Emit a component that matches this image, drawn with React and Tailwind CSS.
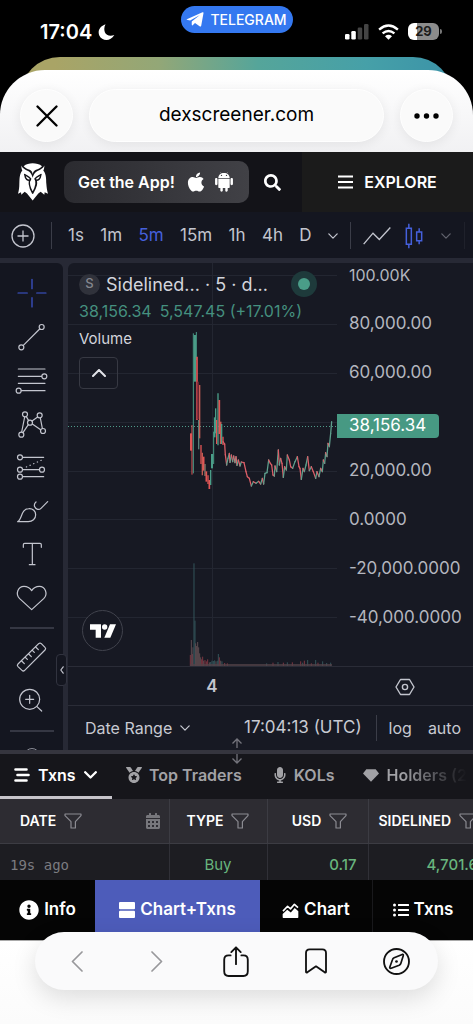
import React from "react";
import {
  FaApple,
  FaSearch,
  FaMedal,
  FaMicrophone,
  FaCalendarAlt,
  FaInfoCircle,
  FaListUl,
} from "react-icons/fa";
import { IoLogoAndroid } from "react-icons/io";

const GREEN = "#4a9d88";
const RED = "#e25555";

/* ---------- small icons ---------- */

function Chevron({ className, d = "M1 1l5 5 5-5", box = "0 0 12 7", width = 1.5 }) {
  return (
    <svg viewBox={box} className={className} fill="none" stroke="currentColor" strokeWidth={width} strokeLinecap="round" strokeLinejoin="round" aria-hidden="true">
      <path d={d} />
    </svg>
  );
}

function Funnel() {
  return (
    <svg viewBox="0 0 18 16" className="h-4 w-[18px] shrink-0 text-[#8b8b92]" fill="none" stroke="currentColor" strokeWidth="1.2" strokeLinejoin="round" aria-hidden="true">
      <path d="M1 1h16v1.6l-5.6 6V15H7V8.600L1 2.600z" />
    </svg>
  );
}

function Owl() {
  return (
    <svg viewBox="54 46 90 113" className="h-[38px] w-[30px]" aria-label="DEX Screener" role="img">
      <path
        fill="#fff"
        d="M64 53C68 63 80 67 87 71C93 75 96 82 98 90C100 82 103 75 110 71C117 67 129 63 133 53C133 60 132 64 130 68C140 80 138 96 139 108C140 120 141 128 144 138L134 133L133 141L122 132L115 137L98 158L81 137L74 132L64 141L63 133L54 138C57 128 58 118 58 108C59 96 57 80 67 68C65 64 64 60 64 53Z"
      />
      <path fill="#fff" d="M71 55C78 48 88 46 98 46C108 46 119 48 126 55C121 61 114 63 108 66C102 69 99 73 98 79C97 73 95 69 89 66C83 63 76 61 71 55Z" />
      <g fill="none" stroke="#131318" strokeWidth="4.500" strokeLinejoin="round" strokeLinecap="round">
        <path d="M74 80C80 84 87 86 92 93C83 104 88 118 98 136C108 118 114 104 105 93C110 86 117 84 123 80" />
        <path d="M75 83C76 94 83 98 89 97M122 83C121 94 114 98 108 97" />
      </g>
    </svg>
  );
}

/* ---------- drawing tools ---------- */

function Tool({ label, box, children, active }) {
  return (
    <button type="button" aria-label={label} className={active ? "h-10 w-10 text-[#3f58d6]" : "h-10 w-10 text-[#c3c5ce]"}>
      <svg viewBox={box} className="h-10 w-10" fill="none" stroke="currentColor" strokeWidth="3.600" strokeLinecap="round" strokeLinejoin="round">
        {children}
      </svg>
    </button>
  );
}

function Sidebar() {
  return (
    <div className="relative w-[63px] shrink-0 rounded-tr-md bg-[#141620]">
      <div className="flex h-[487px] flex-col items-center overflow-hidden pt-[10px]">
        <div className="flex h-[345px] shrink-0 flex-col justify-between">
          <Tool label="Crosshair" box="36 39 120 120" active>
            <path d="M96 58v28M96 113v28M54 99h28M110 99h28" />
          </Tool>
          <Tool label="Trend line" box="36 168 120 120">
            <circle cx="125" cy="198" r="7.500" />
            <circle cx="64" cy="259" r="7.500" />
            <path d="M70 253L119 204" />
          </Tool>
          <Tool label="Fib retracement" box="36 298 120 120">
            <path d="M55 325h80M55 347h70M55 368h80M64 390h71" />
            <circle cx="133" cy="347" r="7.500" />
            <circle cx="56" cy="390" r="7.500" />
          </Tool>
          <Tool label="Pattern" box="36 429 120 120">
            <circle cx="75" cy="460" r="7.500" />
            <circle cx="119" cy="463" r="7.500" />
            <circle cx="90" cy="485" r="7.500" />
            <circle cx="129" cy="510" r="7.500" />
            <circle cx="64" cy="521" r="7.500" />
            <path d="M65 513L74 468M69 515L85 491M79 467L86 479M96 480L113 468M121 471L127 502M97 489L122 506" />
          </Tool>
          <Tool label="Forecast" box="36 563 120 120">
            <circle cx="60" cy="594" r="7.500" />
            <circle cx="60" cy="631" r="7.500" />
            <circle cx="126" cy="631" r="7.500" />
            <circle cx="60" cy="652" r="7.500" />
            <path d="M68 594h63M68 631h50M68 652h63" />
            <path d="M79 623L130 600" strokeDasharray="1 11" />
          </Tool>
          <Tool label="Brush" box="36 -27 120 120">
            <path d="M53 65C67 59 62 27 86 26C99 25 107 34 107 44C107 57 97 65 85 65Z" />
            <path d="M108 6C98 15 105 26 113 28C117 29 120 28 123 25L143 5" />
          </Tool>
          <Tool label="Text" box="36 103 120 120">
            <path d="M70 143v-8q0-4 4-4h46q4 0 4 4v8M97 131v64M88 195h17" />
          </Tool>
          <Tool label="Favorites" box="36 234 120 120">
            <path d="M95 329L59 296C45 282 54 259 72 259C84 259 90 264 95 272C100 264 106 259 118 259C136 259 145 282 131 296Z" />
          </Tool>
        </div>
        <div className="mt-[9px] h-[2px] w-11 shrink-0 bg-[#353743]" />
        <div className="mt-2 h-10 shrink-0">
          <Tool label="Measure" box="36 413 120 120">
            <path d="M54 494L116 433Q120 429 124 433L135 444Q139 448 135 452L74 513Q70 517 66 513L54 502Q50 498 54 494Z" />
            <path d="M65 485l8 8M76 474l6 6M86 464l8 8M97 453l6 6M107 443l8 8" />
          </Tool>
        </div>
        <div className="mt-[3px] h-10 shrink-0">
          <Tool label="Zoom in" box="36 540 120 120">
            <circle cx="89" cy="598" r="30" />
            <path d="M77 598h24M89 586v24M111 620L125 633" />
          </Tool>
        </div>
        <div className="mt-[10px] h-[2px] w-11 shrink-0 bg-[#353743]" />
        <div className="mt-4 h-4 w-4 shrink-0 rounded-full border border-[#8a8c96]" />
      </div>
      <button type="button" aria-label="Collapse toolbar" className="absolute -right-1 bottom-16 flex h-8 w-[11px] items-center justify-center rounded border border-[#31333f] bg-[#141620] text-[#c3c5ce]">
        <Chevron className="h-2 w-1" box="0 0 5 10" d="M4 1L1 5l3 4" />
      </button>
    </div>
  );
}

/* ---------- chart drawing ---------- */

const candles = [
  [63, 370, 422, RED, 6], [66, 345, 494, RED, 3], [70, 70, 490, GREEN, 3], [75, 75, 215, GREEN, 6],
  [79, 66, 150, GREEN, 3], [81, 140, 330, RED, 5], [83, 215, 328, "#8e2c3c", 6], [86, 330, 418, "#5c8079", 4],
  [89, 225, 385, "#c45e55", 4], [93, 405, 462, RED, 4], [97, 428, 496, "#c45e55", 4], [101, 440, 482, RED, 5],
  [105, 462, 498, "#8b7c6d", 4], [109, 484, 515, RED, 5], [114, 496, 522, RED, 4], [118, 510, 537, RED, 5],
  [122, 480, 525, GREEN, 4], [126, 432, 475, GREEN, 6], [131, 365, 462, GREEN, 3], [134, 322, 382, GREEN, 5],
  [137, 295, 370, GREEN, 4], [140, 330, 402, RED, 4], [144, 250, 406, GREEN, 4], [148, 270, 372, RED, 5],
  [152, 335, 402, "#c45e55", 5], [155, 342, 402, GREEN, 4], [159, 380, 405, RED, 4],
];

const trail = [
  [159, 395], [164, 402], [166, 434], [170, 465], [174, 445], [178, 430], [180, 457], [184, 435], [188, 455],
  [191, 438], [195, 458], [198, 440], [201, 466], [205, 450], [210, 468], [214, 456], [222, 458], [228, 485],
  [232, 500], [238, 505], [244, 528], [250, 515], [258, 520], [266, 514], [272, 522], [277, 505], [281, 522],
  [285, 490], [291, 488], [296, 450], [301, 460], [305, 465], [309, 495], [313, 498], [315, 468], [320, 485],
  [323, 445], [325, 420], [328, 465], [332, 445], [336, 460], [340, 502], [344, 470], [349, 480], [352, 435],
  [358, 450], [362, 470], [368, 475], [375, 455], [382, 440], [387, 470], [390, 475], [394, 508], [399, 475],
  [403, 485], [408, 465], [413, 440], [418, 482], [424, 470], [430, 485], [437, 505], [441, 485], [447, 500],
  [452, 475], [457, 485], [460, 450], [464, 460], [467, 428], [471, 440], [474, 400], [478, 410], [482, 370],
  [485, 335],
];

const volume = [
  [61, 345, 1], [64, 300, 0], [67, 342, 1], [69, 322, 0], [72, 70, 2], [75, 242, 2], [77, 310, 0], [80, 318, 0],
  [83, 306, 0], [86, 322, 0], [89, 340, 0], [92, 352, 0], [95, 358, 1], [98, 350, 1], [101, 362, 0], [105, 360, 1],
  [109, 364, 1], [113, 358, 1], [118, 367, 0], [122, 366, 2], [126, 362, 2], [130, 363, 2], [134, 361, 2],
  [138, 364, 0], [142, 362, 2], [145, 342, 2], [148, 352, 1], [152, 362, 0], [156, 364, 2], [164, 369, 1],
  [172, 370, 1], [290, 370, 2], [309, 368, 1], [324, 366, 2], [340, 368, 1], [352, 367, 2], [367, 367, 1],
  [392, 364, 1], [398, 368, 2], [403, 362, 1], [413, 360, 2], [424, 370, 1], [437, 360, 2], [444, 368, 1],
  [458, 364, 2], [470, 369, 2], [482, 368, 2],
];
const volumeColors = ["#5d4b50", "#7c3540", "#33545a"];

function Plot() {
  return (
    <svg viewBox="0 0 269 403" preserveAspectRatio="none" className="h-[403px] w-full" role="img" aria-label="Price and volume chart">
      <g stroke="#232631" strokeWidth="1">
        {[12.500, 61.500, 110.500, 159.500, 208.500, 256.500, 305.500, 354.500].map((y) => (
          <line key={y} x1="0" x2="269" y1={y} y2={y} />
        ))}
        <line x1="144.500" x2="144.500" y1="0" y2="403" />
      </g>
      <g transform="translate(102 277) scale(0.33333)">
        {volume.map(([x, y, c]) => (
          <line key={x} x1={x} x2={x} y1={y} y2="378" stroke={volumeColors[c]} strokeWidth="3" />
        ))}
        <path d="M60 375H486" stroke="#55434a" strokeWidth="4" />
      </g>
      <line x1="0" x2="269" y1="163.500" y2="163.500" stroke="#4f9b8a" strokeWidth="1" strokeDasharray="1 2" />
      <g transform="translate(102 47) scale(0.33333)">
        {candles.map(([x, a, b, c, w]) => (
          <line key={x} x1={x} x2={x} y1={a} y2={b} stroke={c} strokeWidth={w} />
        ))}
        {trail.slice(1).map(([x, y], i) => (
          <line key={x} x1={trail[i][0]} y1={trail[i][1]} x2={x} y2={y} stroke={y < trail[i][1] ? "#5fa08e" : "#dd5f68"} strokeWidth="3.800" strokeLinecap="round" />
        ))}
      </g>
    </svg>
  );
}

const axisRow = "flex h-[49px] items-center pl-3";

function ChartPane() {
  return (
    <div className="flex min-w-0 flex-1 flex-col rounded-tl-md bg-[#171923]">
      <div className="flex h-[404px] border-b border-[#2a2c37]">
        <div className="relative min-w-0 flex-1">
          <Plot />
          <div className="absolute inset-x-0 top-2 pl-[11px]">
            <div className="flex h-[26px] items-center">
              <span className="flex h-[21px] w-[21px] shrink-0 items-center justify-center rounded-full bg-[#30323b] text-[13px] font-medium text-[#85878f]">S</span>
              <span className="ml-[6px] whitespace-nowrap text-[18px] text-[#d3d5dc]">Sidelined... · 5 · d...</span>
              <span className="ml-auto mr-5 flex h-[26px] w-[26px] shrink-0 items-center justify-center rounded-full bg-[#1e3a3b]">
                <span className="h-3 w-3 rounded-full bg-[#4a9d88]" />
              </span>
            </div>
            <div className="flex h-7 items-center gap-2 whitespace-nowrap text-[16px] text-[#45907f]">
              <span>38,156.34</span>
              <span>5,547.45 (+17.01%)</span>
            </div>
            <div className="flex h-7 items-center text-[15px] text-[#d3d5dc]">Volume</div>
            <button type="button" aria-label="Collapse legend" className="mt-1 flex h-8 w-[39px] items-center justify-center rounded border border-[#373943] text-[#e2e3e8]">
              <Chevron className="h-2 w-[14px]" box="0 0 14 8" d="M1 7l6-6 6 6" width={2} />
            </button>
          </div>
          <a href="#tradingview" aria-label="TradingView" className="absolute bottom-[15px] left-[14px] flex h-[41px] w-[41px] items-center justify-center rounded-full border border-[#41434d] bg-[#171923]">
            <svg viewBox="0 0 78 42" className="h-[14px] w-[26px]" fill="#fff" aria-hidden="true">
              <path d="M0 1h33v40H17V17H0z" />
              <circle cx="44" cy="9" r="8" />
              <path d="M60 1h18L61 41H43z" />
            </svg>
          </a>
        </div>
        <div className="w-[136px] shrink-0 text-[17px] text-[#b4b6bf]">
          <div className="h-9 pl-3 text-[16px] leading-6">100.00K</div>
          <div className={axisRow}>80,000.00</div>
          <div className={axisRow}>60,000.00</div>
          <div className="flex h-[49px] items-end pb-2">
            <span className="flex h-6 w-[102px] items-center rounded-r-sm bg-[#479983] pl-3 text-white">38,156.34</span>
          </div>
          <div className={axisRow}>20,000.00</div>
          <div className={axisRow}>0.0000</div>
          <div className={axisRow}>-20,000.0000</div>
          <div className={axisRow}>-40,000.0000</div>
        </div>
      </div>
      <div className="flex h-[39px] items-center border-b border-[#2a2c37] pt-px text-[#c3c5ce]">
        <div className="flex-1 pl-[19px] text-center text-[17px] font-semibold">4</div>
        <button type="button" aria-label="Scale settings" className="flex w-[136px] shrink-0 justify-center">
          <svg viewBox="0 0 20 18" className="h-[18px] w-5" fill="none" stroke="currentColor" strokeWidth="1.400" strokeLinejoin="round">
            <path d="M5.500 1.500h9L19 9l-4.500 7.500h-9L1 9z" />
            <circle cx="10" cy="9" r="2.600" />
          </svg>
        </button>
      </div>
      <div className="flex h-11 items-center whitespace-nowrap pl-[17px] pr-3 text-[16px] text-[#c8cad2]">
        <button type="button" className="flex items-center gap-2">
          Date Range
          <Chevron className="h-[6px] w-[10px]" />
        </button>
        <button type="button" className="ml-auto text-[17px]">17:04:13 (UTC)</button>
        <span className="ml-[14px] mr-3 h-[26px] w-px bg-[#3b3d48]" />
        <button type="button">log</button>
        <button type="button" className="ml-4">auto</button>
      </div>
    </div>
  );
}

/* ---------- sections ---------- */

function StatusBar() {
  return (
    <div className="grid h-[57px] grid-cols-[1fr_auto_1fr] items-start text-white">
      <div className="flex items-center gap-[6px] pl-10 pt-[18px] text-[20px] font-semibold leading-7">
        17:04
        <svg viewBox="0 0 50 52" className="h-[17px] w-[17px]" fill="#fff" aria-label="Focus on">
          <path d="M22 1C5 7-3 21 3 35C10 51 35 57 49 34C34 39 24 34 20 25C17 17 18 8 22 1Z" />
        </svg>
      </div>
      <button type="button" className="mt-[6px] flex h-[27px] w-28 items-center justify-center gap-[6px] rounded-full bg-[#3478f0] text-[14px] font-medium">
        <svg viewBox="0 0 54 46" className="h-[15px] w-[18px]" fill="#fff" aria-hidden="true">
          <path d="M2 22L50 1Q54 0 53 4L46 42Q45 46 41 44L27 34L20 41Q17 42 17 38L17 29L42 9L12 26L2 24Q0 23 2 22Z" />
        </svg>
        TELEGRAM
      </button>
      <div className="flex items-center justify-end gap-[9px] pr-[31px] pt-[23px]">
        <svg viewBox="0 0 24 16" className="h-4 w-6" aria-label="Signal">
          <rect x="0" y="10" width="4.500" height="5.500" rx="1.300" fill="#fff" />
          <rect x="6.300" y="7" width="4.500" height="8.500" rx="1.300" fill="#fff" />
          <rect x="12.700" y="3.500" width="4.500" height="12" rx="1.300" fill="#444" />
          <rect x="19" y="0" width="4.500" height="15.500" rx="1.300" fill="#444" />
        </svg>
        <svg viewBox="0 0 60 46" className="h-4 w-[21px]" fill="none" stroke="#fff" strokeWidth="7" aria-label="Wi-Fi">
          <path d="M3 16Q30-7 57 16" />
          <path d="M13 27Q30 13 47 27" />
          <path d="M30 45L20 35Q30 27 40 35Z" fill="#fff" stroke="none" />
        </svg>
        <div className="flex items-center gap-px">
          <span className="flex h-[17px] w-[31px] items-center justify-center rounded-[6px] bg-[linear-gradient(90deg,#fff_30%,#8c8c8c_30%)] text-[13px] font-bold text-[#1c1c1c]">29</span>
          <span className="h-[5px] w-[2px] rounded-r bg-[#777]" />
        </div>
      </div>
    </div>
  );
}

const glass = "flex h-[53px] items-center justify-center rounded-full border border-white bg-[#fafafa] text-black shadow-[0_2px_12px_rgba(0,0,0,0.07)]";

function BrowserBar() {
  return (
    <div className="relative flex items-center gap-4 rounded-t-[45px] bg-gradient-to-b from-white to-[#f1f1f3] px-5 pb-[10px] pt-[19px]">
      <button type="button" aria-label="Close" className={glass + " w-[53px] shrink-0"}>
        <svg viewBox="0 0 22 22" className="h-[22px] w-[22px]" stroke="currentColor" strokeWidth="2.300" strokeLinecap="round">
          <path d="M1.500 1.500l19 19M20.500 1.500l-19 19" />
        </svg>
      </button>
      <button type="button" className={glass + " flex-1 text-[19px]"}>dexscreener.com</button>
      <button type="button" aria-label="More" className={glass + " w-[53px] shrink-0"}>
        <svg viewBox="0 0 25 6" className="h-[6px] w-[25px]" fill="currentColor">
          <circle cx="3" cy="3" r="2.700" />
          <circle cx="12.500" cy="3" r="2.700" />
          <circle cx="22" cy="3" r="2.700" />
        </svg>
      </button>
    </div>
  );
}

function SiteHeader() {
  return (
    <header className="flex h-[60px] items-center bg-[#131318] pl-[18px] text-white">
      <Owl />
      <button type="button" className="ml-4 flex h-[42px] w-[185px] items-center gap-3 whitespace-nowrap rounded-[10px] bg-gradient-to-r from-[#2b2b30] to-[#414146] pl-[14px] text-[16px] font-semibold">
        Get the App!
        <span className="flex items-center gap-[6px]">
          <FaApple className="h-[22px] w-[18px] shrink-0" />
          <IoLogoAndroid className="h-[26px] w-[26px] shrink-0" />
        </span>
      </button>
      <button type="button" aria-label="Search" className="ml-[15px] mr-auto">
        <FaSearch className="h-[17px] w-[17px]" />
      </button>
      <button type="button" className="flex h-[60px] w-[171px] items-center justify-center gap-[11px] bg-[#1b1b1b] text-[16px] font-semibold">
        <svg viewBox="0 0 15 14" className="h-[14px] w-[15px]" stroke="currentColor" strokeWidth="2.200" aria-hidden="true">
          <path d="M0 1.500h15M0 7h15M0 12.500h15" />
        </svg>
        EXPLORE
      </button>
    </header>
  );
}

function IntervalBar() {
  return (
    <div className="flex h-[51px] items-center overflow-hidden border-b-[5px] border-[#272935] bg-[#141620] pl-[11px] pt-px text-[17px] text-[#c3c5ce]">
      <button type="button" aria-label="Add">
        <svg viewBox="0 0 24 24" className="h-6 w-6" fill="none" stroke="currentColor" strokeWidth="1.300">
          <circle cx="12" cy="12" r="11" />
          <path d="M12 6.500v11M6.500 12h11" />
        </svg>
      </button>
      <span className="ml-4 h-[27px] w-px bg-[#3b3d48]" />
      <div className="ml-4 flex flex-1 items-center justify-between">
        <button type="button">1s</button>
        <button type="button">1m</button>
        <button type="button" className="text-[#4560dc]">5m</button>
        <button type="button">15m</button>
        <button type="button">1h</button>
        <button type="button">4h</button>
        <button type="button">D</button>
        <button type="button" aria-label="More intervals"><Chevron className="h-[6px] w-[10px]" /></button>
      </div>
      <span className="ml-3 h-[27px] w-px bg-[#3b3d48]" />
      <button type="button" aria-label="Line chart" className="ml-3">
        <svg viewBox="0 0 84 56" className="h-[19px] w-7" fill="none" stroke="currentColor" strokeWidth="4">
          <path d="M2 54L30 21L49 40L82 4" />
        </svg>
      </button>
      <button type="button" aria-label="Candles" className="ml-[14px] text-[#4560dc]">
        <svg viewBox="0 0 54 78" className="h-[26px] w-[18px]" fill="none" stroke="currentColor" strokeWidth="4.500">
          <path d="M4 16h15v48H4zM11.500 2v14M11.500 64v12M35 27h15v26H35zM42.500 16v11M42.500 53v11" />
        </svg>
      </button>
      <button type="button" aria-label="More chart types" className="ml-[18px] text-[#62646e]"><Chevron className="h-[6px] w-[10px]" /></button>
      <span className="ml-[13px] mr-2 h-[27px] w-px bg-[#1f212b]" />
    </div>
  );
}

function Tabs() {
  return (
    <div className="relative border-t-4 border-[#35353e] bg-[#16161b]">
      <nav className="flex h-[45px] items-stretch overflow-hidden whitespace-nowrap text-[16px] font-semibold text-[#a2a2a6]">
        <button type="button" className="flex w-28 shrink-0 items-center gap-2 border-b-[3px] border-[#c6c4ca] pl-[14px] text-white">
          <svg viewBox="0 0 16 14" className="h-[14px] w-4" stroke="currentColor" strokeWidth="2.600" strokeLinecap="round" aria-hidden="true">
            <path d="M1.500 1.500h11M3.500 7h11M1.500 12.500h11" />
          </svg>
          Txns
          <Chevron className="h-2 w-[13px]" box="0 0 13 8" d="M1.200 1.200l5.300 5.300 5.300-5.300" width={2.3} />
        </button>
        <button type="button" className="ml-[14px] flex shrink-0 items-center gap-[7px] pb-[3px]">
          <FaMedal className="h-4 w-4" />
          Top Traders
        </button>
        <button type="button" className="ml-8 flex shrink-0 items-center gap-2 pb-[3px]">
          <FaMicrophone className="h-4 w-3" />
          KOLs
        </button>
        <button type="button" className="ml-[29px] flex shrink-0 items-center gap-[7px] pb-[3px]">
          <svg viewBox="0 0 48 38" className="h-[13px] w-4 shrink-0" fill="currentColor" aria-hidden="true">
            <path d="M10 0H38L48 13L24 38L0 13Z" />
          </svg>
          <span className="bg-gradient-to-r from-[#a2a2a6] from-20% to-[#16161b] to-100% bg-clip-text text-transparent">Holders (2</span>
        </button>
      </nav>
      <svg viewBox="0 0 12 26" className="absolute -top-4 left-1/2 h-[26px] w-3 -translate-x-1/2 text-[#74747c]" fill="none" stroke="currentColor" strokeWidth="1.300" aria-hidden="true">
        <path d="M6 1v9M1.500 5.500L6 1l4.500 4.500M6 16v9M1.500 20.500L6 25l4.500-4.500" />
      </svg>
    </div>
  );
}

const th = "border-r border-[#3c3c43] p-0 font-semibold";
const td = "border-r border-[#303037] p-0";

function Transactions() {
  return (
    <div className="overflow-hidden">
      <table className="w-full min-w-[490px] table-fixed border-collapse text-[15px]">
        <colgroup>
          <col className="w-[169px]" />
          <col className="w-[98px]" />
          <col className="w-[101px]" />
          <col />
        </colgroup>
        <thead className="bg-[#2d2c32] text-[14px] text-white">
          <tr className="h-11 border-b border-[#3c3c43]">
            <th className={th}>
              <div className="flex items-center gap-2 pl-5">
                DATE <Funnel />
                <FaCalendarAlt className="ml-auto mr-2 h-4 w-4 text-[#77777c]" />
              </div>
            </th>
            <th className={th}>
              <div className="flex items-center justify-center gap-2">TYPE <Funnel /></div>
            </th>
            <th className={th}>
              <div className="flex items-center justify-center gap-2 pl-1">USD <Funnel /></div>
            </th>
            <th className="p-0 font-semibold">
              <div className="flex items-center gap-2 pl-[10px]">SIDELINED <Funnel /></div>
            </th>
          </tr>
        </thead>
        <tbody className="bg-[#1d1d22] text-[#68b57d]">
          <tr className="h-[37px]">
            <td className={td}><span className="block pl-[10px] pt-[6px] font-['DejaVu_Sans_Mono',monospace] text-[14px] leading-5 text-[#7b7b80]">19s ago</span></td>
            <td className={td}><span className="block pt-[6px] text-center leading-5">Buy</span></td>
            <td className={td}><span className="block pr-[11px] pt-[6px] text-right font-medium leading-5">0.17</span></td>
            <td className="p-0"><span className="block pl-[58px] pt-[6px] font-medium leading-5">4,701.6</span></td>
          </tr>
        </tbody>
      </table>
    </div>
  );
}

const navItem = "flex items-center justify-center gap-[5px] whitespace-nowrap";

function ViewNav() {
  return (
    <nav className="grid h-[60px] grid-cols-[95fr_165fr_113fr_100fr] bg-[#050505] text-[17px] font-semibold text-white">
      <button type="button" className={navItem}>
        <FaInfoCircle className="h-5 w-5" /> Info
      </button>
      <button type="button" className={navItem + " bg-[#4d5cba]"}>
        <svg viewBox="0 0 16 16" className="h-4 w-4" fill="currentColor" aria-hidden="true">
          <rect width="16" height="7.300" rx="1" />
          <rect y="8.700" width="16" height="7.300" rx="1" />
        </svg>
        Chart+Txns
      </button>
      <button type="button" className={navItem + " border-r border-[#19191c]"}>
        <svg viewBox="0 0 50 46" className="h-[15px] w-[17px]" aria-hidden="true">
          <path d="M2 25L16 10L25 18L37 4L48 14" fill="none" stroke="#fff" strokeWidth="5" strokeLinejoin="round" />
          <path d="M1 34L15 21L26 29L38 15L49 25V44Q49 46 47 46H3Q1 46 1 44Z" fill="#fff" />
        </svg>
        Chart
      </button>
      <button type="button" className={navItem}>
        <FaListUl className="h-4 w-4" /> Txns
      </button>
    </nav>
  );
}

function BottomBar() {
  return (
    <div className="border-t border-[#aaa] bg-gradient-to-b from-white to-[#fbfbfb] px-[35px] pb-[34px]">
      <div className="relative -mt-[9px] grid h-[58px] grid-cols-5 items-center justify-items-center rounded-full bg-[#fafafb] px-[2px] text-[#111] shadow-[0_8px_24px_rgba(0,0,0,0.13)]">
        <button type="button" aria-label="Back" className="text-[#98989b]">
          <Chevron className="h-[21px] w-3" box="0 0 12 21" d="M11 1L1.500 10.500 11 20" width={1.7} />
        </button>
        <button type="button" aria-label="Forward" className="text-[#98989b]">
          <Chevron className="h-[21px] w-3" box="0 0 12 21" d="M1 1l9.500 9.500L1 20" width={1.7} />
        </button>
        <button type="button" aria-label="Share">
          <svg viewBox="0 0 76 92" className="h-[31px] w-[26px]" fill="none" stroke="currentColor" strokeWidth="5.500" strokeLinecap="round" strokeLinejoin="round">
            <path d="M22 28H16Q3 28 3 41V75Q3 89 16 89H60Q73 89 73 75V41Q73 28 60 28H54M38 54V4M24 18L38 4L52 18" />
          </svg>
        </button>
        <button type="button" aria-label="Bookmarks">
          <svg viewBox="0 0 66 76" className="h-[26px] w-[22px]" fill="none" stroke="currentColor" strokeWidth="5.500" strokeLinejoin="round">
            <path d="M3 14Q3 3 14 3H52Q63 3 63 14V70Q63 74 59 72L33 54L7 72Q3 74 3 70Z" />
          </svg>
        </button>
        <button type="button" aria-label="Open in browser">
          <svg viewBox="0 0 80 80" className="h-[27px] w-[27px]" fill="none" stroke="currentColor" strokeWidth="5.500" strokeLinejoin="round">
            <circle cx="40" cy="40" r="37" />
            <path d="M57 19Q61 18 60 23L53 45Q52 49 48 51L24 60Q19 61 20 57L28 35Q29 31 33 29Z" strokeWidth="5" />
            <circle cx="40" cy="40" r="4" fill="currentColor" stroke="none" />
          </svg>
        </button>
      </div>
    </div>
  );
}

export default function App() {
  return (
    <div className="min-h-screen bg-black font-['Inter','Liberation_Sans',sans-serif]">
      <StatusBar />
      <div className="mx-5 -mb-[27px] h-10 rounded-t-[40px] bg-[linear-gradient(90deg,#a9a466_8%,#93a777_32%,#55a59a_55%,#46a0a8_80%,#3b93a8_100%)]" />
      <BrowserBar />
      <SiteHeader />
      <IntervalBar />
      <main className="flex gap-[5px] bg-[#272935]">
        <Sidebar />
        <ChartPane />
      </main>
      <Tabs />
      <Transactions />
      <ViewNav />
      <BottomBar />
    </div>
  );
}
